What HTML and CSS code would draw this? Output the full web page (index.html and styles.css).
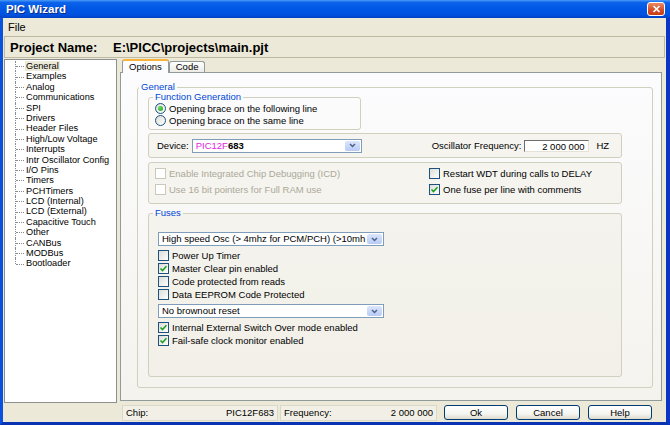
FILE: index.html
```html
<!DOCTYPE html>
<html lang="en">
<head>
    <meta charset="UTF-8">
    <meta name="viewport" content="width=device-width, initial-scale=1.0">
    <title>PIC Wizard</title>
    <link rel="stylesheet" href="styles.css">
</head>
<body>
<div class="window">
    <div class="titlebar">
        <span class="title">PIC Wizard</span>
        <span class="close-btn">
            <svg width="9" height="8" viewBox="0 0 9 8"><path d="M1.5 1L7.5 7M7.5 1L1.5 7" stroke="#fff" stroke-width="1.7"/></svg>
        </span>
    </div>
    <div class="frame">
        <div class="menubar"><span class="menu-item">File</span></div>
        <div class="project">
            <span class="project-label">Project Name:</span>
            <span class="project-path">E:\PICC\projects\main.pjt</span>
        </div>

        <div class="main">
            <div class="tree">
                <ul class="tree-list">
                    <li class="tree-item"><span class="selected">General</span></li>
                    <li class="tree-item">Examples</li>
                    <li class="tree-item">Analog</li>
                    <li class="tree-item">Communications</li>
                    <li class="tree-item">SPI</li>
                    <li class="tree-item">Drivers</li>
                    <li class="tree-item">Header Files</li>
                    <li class="tree-item">High/Low Voltage</li>
                    <li class="tree-item">Interrupts</li>
                    <li class="tree-item">Intr Oscillator Config</li>
                    <li class="tree-item">I/O Pins</li>
                    <li class="tree-item">Timers</li>
                    <li class="tree-item">PCHTimers</li>
                    <li class="tree-item">LCD (Internal)</li>
                    <li class="tree-item">LCD (External)</li>
                    <li class="tree-item">Capacitive Touch</li>
                    <li class="tree-item">Other</li>
                    <li class="tree-item">CANBus</li>
                    <li class="tree-item">MODBus</li>
                    <li class="tree-item">Bootloader</li>
                </ul>
            </div>

            <div class="tabs">
                <div class="tab-strip">
                    <span class="tab active">Options</span>
                    <span class="tab">Code</span>
                </div>
                <div class="tab-panel">
                    <fieldset class="group general">
                        <legend class="legend-general">General</legend>

                        <fieldset class="group func-gen">
                            <legend class="legend-func">Function Generation</legend>
                            <div class="option">
                                <span class="radio checked"></span>Opening brace on the following line
                            </div>
                            <div class="option">
                                <span class="radio"></span>Opening brace on the same line
                            </div>
                        </fieldset>

                        <div class="box device-row">
                            <span class="field-label">Device:</span>
                            <div class="combo device-combo">
                                <span class="combo-text"><span class="chip-family">PIC12F</span><b>683</b></span>
                                <span class="combo-btn">
                                    <svg width="7" height="5" viewBox="0 0 7 5"><path d="M1 1L3.5 3.5L6 1" fill="none" stroke="#4d6185" stroke-width="1.5"/></svg>
                                </span>
                            </div>
                            <span class="field-label osc-label">Oscillator Frequency:</span>
                            <span class="text-input">2 000 000</span>
                            <span class="field-label hz-label">HZ</span>
                        </div>

                        <div class="box options-grid">
                            <div class="option disabled"><span class="check"></span>Enable Integrated Chip Debugging (ICD)</div>
                            <div class="option"><span class="check"></span>Restart WDT during calls to DELAY</div>
                            <div class="option disabled"><span class="check"></span>Use 16 bit pointers for Full RAM use</div>
                            <div class="option">
                                <span class="check"><svg width="9" height="9" viewBox="0 0 9 9"><path d="M1.5 4.5L3.5 6.5L7.5 2.3" fill="none" stroke="#21a121" stroke-width="1.6"/></svg></span>One fuse per line with comments
                            </div>
                        </div>

                        <fieldset class="group fuses">
                            <legend class="legend-fuses">Fuses</legend>
                            <div class="combo fuse-combo">
                                <span class="combo-text">High speed Osc (&gt; 4mhz for PCM/PCH) (&gt;10mh</span>
                                <span class="combo-btn">
                                    <svg width="7" height="5" viewBox="0 0 7 5"><path d="M1 1L3.5 3.5L6 1" fill="none" stroke="#4d6185" stroke-width="1.5"/></svg>
                                </span>
                            </div>
                            <div class="fuse-list">
                                <div class="option"><span class="check"></span>Power Up Timer</div>
                                <div class="option">
                                    <span class="check"><svg width="9" height="9" viewBox="0 0 9 9"><path d="M1.5 4.5L3.5 6.5L7.5 2.3" fill="none" stroke="#21a121" stroke-width="1.6"/></svg></span>Master Clear pin enabled
                                </div>
                                <div class="option"><span class="check"></span>Code protected from reads</div>
                                <div class="option"><span class="check"></span>Data EEPROM Code Protected</div>
                            </div>
                            <div class="combo fuse-combo">
                                <span class="combo-text">No brownout reset</span>
                                <span class="combo-btn">
                                    <svg width="7" height="5" viewBox="0 0 7 5"><path d="M1 1L3.5 3.5L6 1" fill="none" stroke="#4d6185" stroke-width="1.5"/></svg>
                                </span>
                            </div>
                            <div class="fuse-list">
                                <div class="option">
                                    <span class="check"><svg width="9" height="9" viewBox="0 0 9 9"><path d="M1.5 4.5L3.5 6.5L7.5 2.3" fill="none" stroke="#21a121" stroke-width="1.6"/></svg></span>Internal External Switch Over mode enabled
                                </div>
                                <div class="option">
                                    <span class="check"><svg width="9" height="9" viewBox="0 0 9 9"><path d="M1.5 4.5L3.5 6.5L7.5 2.3" fill="none" stroke="#21a121" stroke-width="1.6"/></svg></span>Fail-safe clock monitor enabled
                                </div>
                            </div>
                        </fieldset>
                    </fieldset>
                </div>
            </div>
        </div>

        <div class="statusbar">
            <div class="status-field"><span>Chip:</span><span>PIC12F683</span></div>
            <div class="status-field freq-field"><span>Frequency:</span><span>2 000 000</span></div>
            <button class="btn first-btn">Ok</button>
            <button class="btn">Cancel</button>
            <button class="btn">Help</button>
        </div>
    </div>
</div>
</body>
</html>
```

FILE: styles.css
```css
body {
    margin: 0;
    font-family: "Liberation Sans", Arial, sans-serif;
    font-size: 9.5px;
    color: #000;
    background: #fff;
}

.window {
    width: 670px;
    height: 425px;
    display: flex;
    flex-direction: column;
    overflow: hidden;
}

/* title bar */
.titlebar {
    height: 18px;
    flex: none;
    display: flex;
    align-items: center;
    justify-content: space-between;
    padding: 0 5px 0 6px;
    background: linear-gradient(180deg, #4a9af7 0%, #0c62e8 14%, #0058e6 45%, #0052e0 80%, #0042c4 100%);
}

.title {
    color: #fff;
    font-weight: bold;
    font-size: 11.5px;
    text-shadow: 1px 1px 0 #0a2c8a;
}

.close-btn {
    width: 18px;
    height: 14px;
    box-sizing: border-box;
    border: 1px solid #fff;
    border-radius: 3px;
    background: linear-gradient(180deg, #ec8a66, #d6502a 55%, #c53d17);
    display: flex;
    align-items: center;
    justify-content: center;
}

.frame {
    flex: 1;
    display: flex;
    flex-direction: column;
    background: #ece9d8;
    border-left: 3px solid #0a52de;
    border-right: 4px solid #0936c4;
    border-bottom: 3px solid #0a33b4;
}

.menubar {
    height: 18px;
    display: flex;
    align-items: center;
    padding-left: 5px;
    font-size: 11px;
}

.project {
    height: 22px;
    margin: 0 1px;
    box-sizing: border-box;
    border: 1px solid #bdb9a3;
    display: flex;
    align-items: center;
    padding-left: 5px;
    font-size: 13px;
    font-weight: bold;
}

.project-label {
    width: 103px;
}

/* main area */
.main {
    height: 345px;
    display: flex;
}

.tree {
    width: 113px;
    height: 344px;
    box-sizing: border-box;
    margin: 1px 0 0 1px;
    background: #fff;
    border: 1px solid #8e8f8f;
}

.tree-list {
    list-style: none;
    margin: 0;
    padding: 1px 0 0 10px;
}

.tree-item {
    position: relative;
    height: 10.4px;
    line-height: 10.4px;
    padding-left: 11px;
    font-size: 9.2px;
    white-space: nowrap;
}

.tree-item::before {
    content: '';
    position: absolute;
    left: 0;
    top: 0;
    bottom: 0;
    border-left: 1px dotted #8a8a8a;
}

.tree-item:last-child::before {
    bottom: 50%;
}

.tree-item::after {
    content: '';
    position: absolute;
    left: 1px;
    top: 50%;
    width: 8px;
    border-top: 1px dotted #8a8a8a;
}

.selected {
    background: #ece9d8;
    margin-left: -1px;
    padding: 0 1px;
}

/* tabs */
.tabs {
    width: 542px;
    margin: 0 0 2px 3px;
    display: flex;
    flex-direction: column;
}

.tab-strip {
    height: 14px;
    flex: none;
    display: flex;
    align-items: flex-end;
    padding-left: 2px;
    position: relative;
    z-index: 1;
}

.tab {
    height: 10px;
    line-height: 10px;
    padding: 0 6px;
    border: 1px solid #919b9c;
    border-bottom: none;
    border-radius: 3px 3px 0 0;
    background: linear-gradient(180deg, #fff, #ecebe5);
}

.tab.active {
    height: 12px;
    line-height: 12px;
    border-top: 2px solid #f8b33a;
    background: #fcfcfe;
    margin-bottom: -1px;
}

.tab-panel {
    flex: 1;
    display: flex;
    flex-direction: column;
    border: 1px solid #919b9c;
    background: linear-gradient(180deg, #fcfcfe, #f4f3ee);
    padding: 9px 8px 12px 16px;
}

/* group boxes */
.group {
    margin: 0;
    min-width: 0;
    border: 1px solid #d0d0bf;
    border-radius: 3px;
}

.group legend {
    padding: 0 2px;
    line-height: 10px;
    font-size: 9.5px;
    color: #0046d5;
}

.general {
    flex: 1;
    padding: 0 30px 10px 10px;
}

.legend-general {
    margin-left: -9px;
}

.func-gen {
    width: 213px;
    box-sizing: border-box;
    padding: 0 0 3px 6px;
}

.legend-func {
    margin-left: -2px;
}

.box {
    border: 1px solid #d0d0bf;
    border-radius: 3px;
    box-sizing: border-box;
    background: rgba(236, 233, 216, 0.3);
}

.device-row {
    margin-top: 3px;
    height: 25px;
    display: flex;
    align-items: center;
    padding-left: 8px;
}

.field-label {
    white-space: nowrap;
}

.device-combo {
    width: 170px;
    margin-left: 3px;
}

.chip-family {
    color: #e31ce3;
}

.osc-label {
    margin-left: 70px;
}

.text-input {
    width: 65px;
    height: 12px;
    line-height: 12px;
    margin-left: 3px;
    box-sizing: border-box;
    padding-right: 4px;
    text-align: right;
    background: #fff;
    border-top: 1px solid #6d6d6d;
    border-left: 1px solid #6d6d6d;
    border-right: 1px solid #e4e2d6;
    border-bottom: 1px solid #e4e2d6;
}

.hz-label {
    margin-left: 7px;
}

.options-grid {
    margin-top: 4px;
    height: 42px;
    display: grid;
    grid-template-columns: 274px 1fr;
    grid-auto-rows: 14px;
    row-gap: 2px;
    padding: 4px 0 0 6px;
}

.fuses {
    margin-top: 4px;
    height: 169px;
    box-sizing: border-box;
    padding: 14px 0 0 9px;
    background: rgba(236, 233, 216, 0.3);
}

.legend-fuses {
    margin-left: -5px;
}

.fuse-list {
    display: flex;
    flex-direction: column;
    margin-top: 4px;
}

.fuse-list + .combo {
    margin-top: 3px;
}

.combo + .fuse-list {
    margin-top: 3px;
}

/* controls */
.option {
    height: 12px;
    display: flex;
    align-items: center;
    white-space: nowrap;
}

.fuse-list .option,
.options-grid .option {
    height: 13px;
}

.option.disabled {
    color: #aca899;
}

.radio {
    width: 11px;
    height: 11px;
    box-sizing: border-box;
    margin-right: 3px;
    border: 1px solid #1c5180;
    border-radius: 50%;
    background: linear-gradient(135deg, #dcdcd7, #fff);
    display: flex;
    align-items: center;
    justify-content: center;
}

.radio.checked::after {
    content: '';
    width: 5px;
    height: 5px;
    border-radius: 50%;
    background: radial-gradient(circle at 35% 35%, #63db5e, #21a121);
}

.check {
    width: 11px;
    height: 11px;
    flex: none;
    box-sizing: border-box;
    margin-right: 3px;
    border: 1px solid #1c5180;
    background: linear-gradient(135deg, #dcdcd7, #fff);
    display: flex;
    align-items: center;
    justify-content: center;
}

.disabled .check {
    border-color: #cac8bb;
    background: #fff;
}

.combo {
    height: 14px;
    box-sizing: border-box;
    display: flex;
    align-items: stretch;
    background: #fff;
    border: 1px solid #7f9db9;
}

.combo-text {
    flex: 1;
    white-space: nowrap;
    line-height: 12px;
    padding-left: 3px;
}

.combo-btn {
    width: 15px;
    flex: none;
    margin: 1px;
    border-radius: 2px;
    background: linear-gradient(180deg, #dce6fd, #b7cbf6);
    display: flex;
    align-items: center;
    justify-content: center;
}

.fuse-combo {
    width: 226px;
}

/* status bar */
.statusbar {
    height: 19px;
    display: flex;
    align-items: center;
    padding-left: 119px;
}

.status-field {
    width: 156px;
    height: 16px;
    box-sizing: border-box;
    display: flex;
    align-items: center;
    justify-content: space-between;
    padding: 0 3px;
    border: 1px solid #dcd8c6;
    background: #f2f0e6;
}

.freq-field {
    width: 157px;
    margin-left: 2px;
}

.btn {
    width: 64px;
    height: 15px;
    padding: 0;
    margin-left: 8px;
    font-family: inherit;
    font-size: 9.5px;
    color: #000;
    border: 1px solid #003c74;
    border-radius: 3px;
    background: linear-gradient(180deg, #fff, #f4f4f0 60%, #dedbcd);
}

.first-btn {
    margin-left: 7px;
}
```
